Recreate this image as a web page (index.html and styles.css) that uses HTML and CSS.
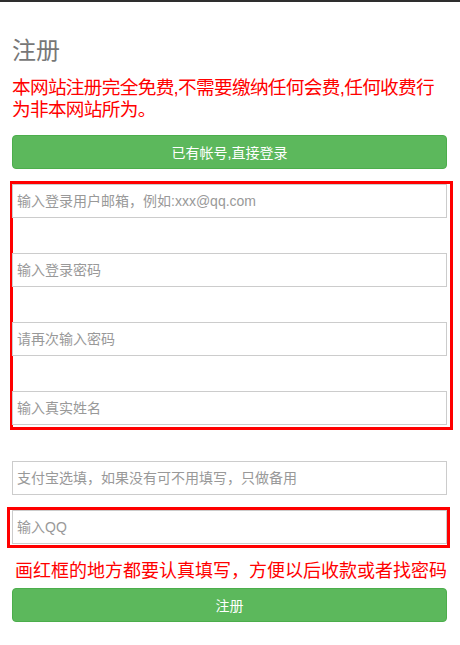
FILE: index.html
```html
<!DOCTYPE html>
<html lang="zh-CN">
<head>
<meta charset="utf-8">
<title>注册</title>
<link rel="stylesheet" href="styles.css">
</head>
<body>
<div class="topbar"></div>
<div class="container">
  <h3 class="title">注册</h3>
  <p class="notice">本网站注册完全免费,不需要缴纳任何会费,任何收费行<br>为非本网站所为。</p>
  <a class="btn">已有帐号,直接登录</a>
  <div class="redbox redbox-main">
    <input class="field" type="text" placeholder="输入登录用户邮箱，例如:xxx@qq.com">
    <input class="field" type="password" placeholder="输入登录密码">
    <input class="field" type="password" placeholder="请再次输入密码">
    <input class="field" type="text" placeholder="输入真实姓名">
  </div>
  <input class="field field-alipay" type="text" placeholder="支付宝选填，如果没有可不用填写，只做备用">
  <div class="redbox redbox-qq">
    <input class="field" type="text" placeholder="输入QQ">
  </div>
  <p class="hint">画红框的地方都要认真填写，方便以后收款或者找密码</p>
  <a class="btn btn-submit">注册</a>
</div>
</body>
</html>
```

FILE: styles.css
```css
* { box-sizing: border-box; }

html, body {
  margin: 0;
  padding: 0;
  background: #fff;
  font-family: "Liberation Sans", "Noto Sans CJK SC", sans-serif;
}

.topbar {
  height: 2px;
  background: #2e2e2e;
}

.container {
  padding: 0 13px 0 12px;
}

.title {
  margin: 35.5px 0 0;
  font-size: 24px;
  line-height: 26.4px;
  font-weight: normal;
  color: #777;
}

.notice {
  margin: 13.5px 0 0;
  font-size: 18.67px;
  line-height: 21.5px;
  letter-spacing: -0.7px;
  color: #ff0000;
  white-space: nowrap;
}

.btn {
  display: flex;
  align-items: center;
  justify-content: center;
  height: 34px;
  margin-top: 14.5px;
  background: #5cb85c;
  border: 1px solid #4cae4c;
  border-radius: 4px;
  color: #fff;
  font-size: 14px;
  text-decoration: none;
}

.redbox {
  display: flex;
  flex-direction: column;
  border: 3px solid #ff0000;
}

.redbox-main {
  margin: 12px -6px 0 -2px;
  gap: 35px;
  padding-bottom: 2px;
}

.redbox-main .field {
  margin-left: -1px;
}

.redbox-qq {
  margin: 12px -3px 0 -5px;
  padding-bottom: 1px;
}

.redbox-qq .field {
  margin-left: 2px;
}

.field {
  display: block;
  width: 435px;
  height: 34px;
  padding: 0 4px;
  border: 1px solid #ccc;
  border-radius: 0;
  background: #fff;
  font-family: "Liberation Sans", "Noto Sans CJK SC", sans-serif;
  font-size: 14px;
  color: #555;
  outline: none;
}

.field::placeholder {
  color: #999;
  opacity: 1;
}

.field-alipay {
  margin-top: 31px;
}

.hint {
  margin: 12.7px 0 0;
  padding-left: 3px;
  font-size: 18px;
  line-height: 20px;
  color: #ff0000;
  white-space: nowrap;
}

.btn-submit {
  margin-top: 7.6px;
}
```
